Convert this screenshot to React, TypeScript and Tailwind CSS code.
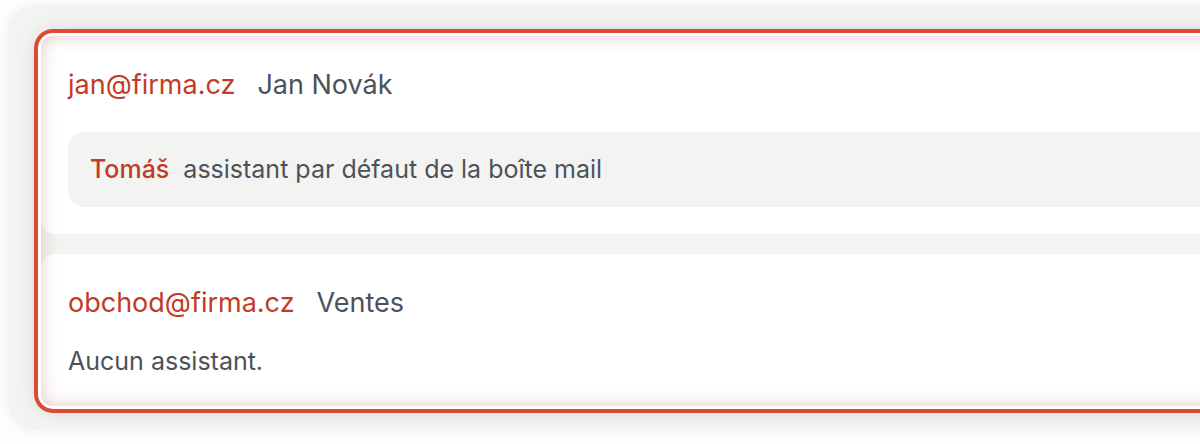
import React from 'react';

type Mailbox = {
  email: string;
  name: string;
  assistant?: { name: string; note: string };
};

const mailboxes: Mailbox[] = [
  {
    email: 'jan@firma.cz',
    name: 'Jan Novák',
    assistant: { name: 'Tomáš', note: 'assistant par défaut de la boîte mail' },
  },
  { email: 'obchod@firma.cz', name: 'Ventes' },
];

const MailboxCard: React.FC<{ box: Mailbox }> = ({ box }) => (
  <div className="bg-white rounded-[14px] px-[27px] pt-[32px] pb-[27px]">
    <div className="flex items-baseline gap-[22px] text-[27px] leading-[34px]">
      <span className="text-[#c23b26]">{box.email}</span>
      <span className="text-[#4d525a]">{box.name}</span>
    </div>
    {box.assistant ? (
      <div className="mt-[30px] rounded-[16px] bg-[#f3f3f1] px-[22px] py-[21px] flex items-baseline gap-[14px] text-[25px] leading-[33px]">
        <span className="font-medium text-[#c23b26]">{box.assistant.name}</span>
        <span className="text-[#4d525a]">{box.assistant.note}</span>
      </div>
    ) : (
      <p className="mt-[25px] mb-[2px] text-[25px] leading-[32px] text-[#4d525a]">Aucun assistant.</p>
    )}
  </div>
);

export default function App() {
  return (
    <div
      className="h-[444px] w-[1200px] overflow-hidden bg-[#fdfdfd] pl-[8px] pt-[5px]"
      style={{ fontFamily: 'Inter, "Noto Sans", sans-serif' }}
    >
      <div className="w-[1320px] rounded-[28px] bg-[#f3f3f1] pl-[33px] pr-[29px] pt-[31px] pb-[24px] shadow-[0_0_12px_rgba(0,0,0,0.06)]">
        <div className="relative rounded-[12px] bg-[#f3f3f1] ring-4 ring-[#dc4b30] ring-offset-[3px] ring-offset-white shadow-[0_0_22px_rgba(0,0,0,0.22)]">
          <div className="flex flex-col gap-[20px] overflow-hidden rounded-[12px]">
            {mailboxes.map((box) => (
              <MailboxCard key={box.email} box={box} />
            ))}
          </div>
          <div className="pointer-events-none absolute inset-0 rounded-[12px] shadow-[inset_0_0_18px_rgba(170,70,60,0.28)]" />
        </div>
      </div>
    </div>
  );
}
